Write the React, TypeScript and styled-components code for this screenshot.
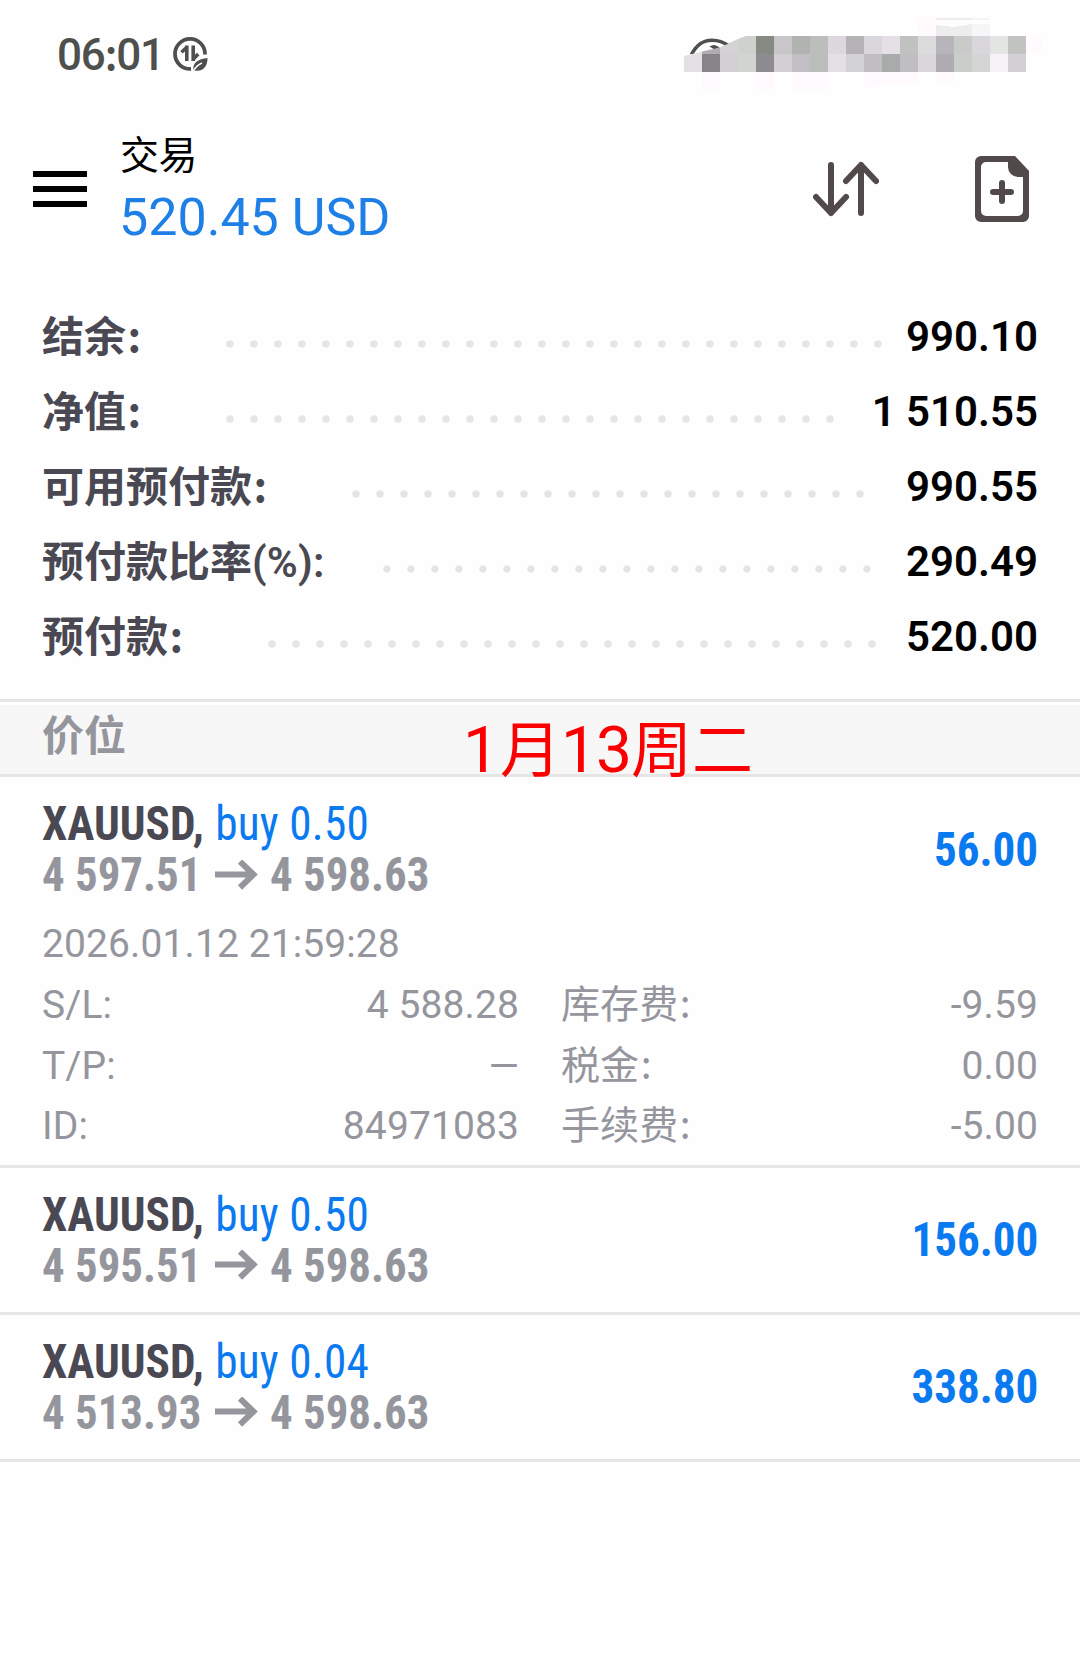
import React from "react";
import styled, { createGlobalStyle } from "styled-components";

const latin = `Roboto, "Noto Sans CJK SC", sans-serif`;
const condensed = `"Roboto Condensed", Roboto, "Noto Sans CJK SC", sans-serif`;

const GlobalStyle = createGlobalStyle`
  * { box-sizing: border-box; }
  body { margin: 0; background: #fefefe; font-family: ${latin}; }
`;

const Screen = styled.main`
  width: 1080px;
  height: 1658px;
  background: #fefefe;
  display: flex;
  flex-direction: column;
  overflow: hidden;
`;

const StatusBar = styled.header`
  height: 108px;
  display: flex;
  align-items: center;
  justify-content: space-between;
  padding: 0 36px 0 57px;
`;

const Clock = styled.div`
  display: flex;
  align-items: center;
  gap: 8px;
  padding-top: 2px;
  font-size: 44px;
  line-height: 52px;
  font-weight: 500;
  letter-spacing: -1.3px;
  color: #4e504e;
  svg { margin-top: -3px; }
`;

const Colon = styled.span<{ $gap?: number }>`
  font-family: "Noto Sans CJK SC", sans-serif;
  line-height: 0;
  padding-left: ${(p) => p.$gap ?? 0}px;
`;

const AppBar = styled.nav`
  height: 162px;
  display: flex;
  align-items: center;
  padding: 0 51px 0 33px;
`;

const MenuButton = styled.div`
  width: 54px;
  display: flex;
  flex-direction: column;
  gap: 9px;
  span { height: 6px; background: #000; }
`;

const TitleBlock = styled.div`
  flex: 1;
  padding-left: 33px;
`;

const Title = styled.div`
  font-size: 39px;
  line-height: 54px;
  letter-spacing: -0.5px;
  color: #000;
`;

const Total = styled.div`
  margin: 0 0 -2px -1px;
  padding-top: 2px;
  font-size: 52px;
  line-height: 66px;
  color: #1e80e6;
`;

const Actions = styled.div`
  display: flex;
  align-items: center;
  gap: 96px;
  svg { display: block; }
`;

const Summary = styled.section`
  padding: 29px 42px 25px;
`;

const SummaryRow = styled.div<{ $label: number; $dots: number }>`
  height: 75px;
  display: grid;
  grid-template-columns: ${(p) => p.$label}px ${(p) => p.$dots * 24}px 1fr;
  font-size: 42px;
  line-height: 75px;
  white-space: nowrap;
`;

const SummaryLabel = styled.span`
  padding-top: 1px;
  font-weight: 700;
  color: #4a4953;
`;

const Ratio = styled.span`
  font-weight: 600;
  letter-spacing: 0.2px;
`;

const Leader = styled.span`
  background: radial-gradient(circle at 12px 45px, #e5e5e5 3.3px, transparent 4.1px) 0 0 / 24px 75px repeat-x;
`;

const SummaryValue = styled.span`
  font-weight: 600;
  color: #000;
  text-align: right;
`;

const SectionHead = styled.div`
  position: relative;
  height: 78px;
  border-top: 3px solid #e5e5e5;
  border-bottom: 3px solid #e5e5e5;
  padding-top: 3px;
`;

const SectionTitle = styled.div`
  height: 69px;
  background: #f7f7f7;
  padding-left: 42px;
  font-size: 42px;
  line-height: 63px;
  font-weight: 700;
  color: #95969d;
`;

const DateNote = styled.div`
  position: absolute;
  left: 463px;
  top: 9px;
  font-size: 61px;
  line-height: 80px;
  color: #fb0000;
  white-space: nowrap;
`;

const Digits = styled.span<{ $spacing: number }>`
  font-size: 64px;
  letter-spacing: ${(p) => p.$spacing}px;
`;

const Position = styled.article`
  border-bottom: 3px solid #e5e5e5;
`;

const PositionHead = styled.div`
  height: 144px;
  padding: 0 42px;
  display: flex;
  align-items: center;
  justify-content: space-between;
  font-family: ${condensed};
  font-stretch: 75%;
  font-size: 48px;
  line-height: 51px;
  font-weight: 700;
`;

const Symbol = styled.div`
  color: #4a4953;
  transform: scaleX(0.942);
  transform-origin: left;
`;

const Side = styled.span`
  color: #0a7af0;
  font-weight: 400;
  letter-spacing: 0.2px;
  padding-left: 1px;
`;

const Prices = styled.div`
  display: flex;
  align-items: center;
  color: #95969d;
`;

const Price = styled.span<{ $width?: number }>`
  width: ${(p) => (p.$width ? `${p.$width}px` : "auto")};
  transform: scaleX(0.934);
  transform-origin: left;
`;

const Arrow = styled.svg`
  display: block;
  margin-right: 12px;
`;

const Profit = styled.div`
  color: #0a7af0;
  transform: scaleX(0.938);
  transform-origin: right;
`;

const Details = styled.div`
  padding: 0 42px 8px;
  font-size: 39px;
  letter-spacing: 0.1px;
  color: #95969d;
`;

const OpenTime = styled.div`
  line-height: 46px;
  padding-bottom: 8px;
`;

const DetailGrid = styled.div`
  display: grid;
  grid-template-columns: 477px 477px;
  column-gap: 42px;
  grid-auto-rows: 60.67px;
  line-height: 60.67px;
`;

const Detail = styled.div`
  display: flex;
  justify-content: space-between;
`;

const DataSaverIcon = () => (
  <svg width="36" height="36" viewBox="0 0 36 36" fill="none" stroke="#4e504e">
    <path d="M33 18.500A15 15 0 1 0 19 32.900" strokeWidth="3.800" />
    <path d="M14.800 9.500v15.500M9.500 16.200L14.800 11.200M21.200 9.500v15.500M21.200 23.200l5-5.200" strokeWidth="3.600" />
    <path d="M21.500 34.500C20 27 26 23 35.500 22C35.500 31 31 36 21.500 34.500Z" fill="#4e504e" stroke="none" />
    <path d="M21.500 34.800Q24.500 29.500 30 27" stroke="#fefefe" strokeWidth="1.400" />
  </svg>
);

const rowTop = ["", "", "#d5d2d5", "#cfd1cf", "#858a83", "#c9c6ca", "#b1b3b1", "#bcbebc", "#dcd8dd", "#b5b3b6", "#dad7dc", "#e5e0e5", "#c0c2c0", "#dcdcdc", "#b7b5b9", "#c9cbc9", "#dad7dc", "#e3e5e3", "#c1c3c1"];
const rowBottom = ["#e5e0e5", "#878387", "#d3d0d4", "#d2d4d2", "#8f8c91", "#d3d0d4", "#c1bfc3", "#bbbdbb", "#e5e0e5", "#d2d1d4", "#c0bec3", "#a8aba9", "#c0bec3", "#dad7dc", "#afadb1", "#cbcdcb", "#d5d5d5", "#f7f2f7", "#d2d0d4"];

const StatusMosaic = () => (
  <svg width="360" height="108" viewBox="684 0 360 108" shapeRendering="crispEdges">
    <g fill="#fefafe">
      <rect x="918" y="17" width="18" height="19" />
      <rect x="1026" y="36" width="16" height="18" />
      <rect x="702" y="72" width="18" height="18" />
      <rect x="756" y="72" width="18" height="18" />
      <rect x="792" y="72" width="36" height="18" />
      <path d="M864 72h54v10l-54 5z" />
      <rect x="936" y="72" width="18" height="11" />
    </g>
    <rect x="936" y="18" width="36" height="2" fill="#ededed" />
    <rect x="972" y="18" width="18" height="2" fill="#f5f5f5" />
    <path d="M936 25l18 2l18-3v12h-36z" fill="#ededed" />
    <rect x="972" y="24" width="18" height="12" fill="#f6f6f6" />
    {rowTop.map((c, i) => (i > 3 ? <rect key={i} x={684 + i * 18} y="36" width="18" height="18" fill={c} /> : null))}
    {rowBottom.map((c, i) => (i > 0 ? <rect key={i} x={684 + i * 18} y="54" width="18" height="18" fill={c} /> : null))}
    <g shapeRendering="auto">
      <path d="M691.500 54.500C696 45.500 703.500 40.200 712 40.200C718 40.200 723.500 42 729 46" fill="none" stroke="#4e504e" strokeWidth="3.600" />
      <path d="M709.500 46.500q5-3.500 10 1l-5 2z" fill="#4e504e" />
      <path d="M684 56l18-4.500v20.500h-18z" fill="#e5e0e5" />
      <path d="M702 51.500l18-4v6.500h-18z" fill="#b0adb1" />
      <path d="M720 47.500l18-8.500v15h-18z" fill="#d5d2d5" />
      <path d="M738 39l8-3h10v18h-18z" fill="#cfd1cf" />
    </g>
  </svg>
);

const SortIcon = () => (
  <svg width="66" height="60" viewBox="813 159 66 60" fill="none" stroke="#524a4a" strokeWidth="6" strokeLinecap="round" strokeLinejoin="round">
    <path d="M831 165v48M816 197l15 16l15-16M861 213v-48M846 181l15-16l15 16" />
  </svg>
);

const NewOrderIcon = () => (
  <svg width="54" height="66" viewBox="0 0 54 66" fill="#524a4a">
    <path fillRule="evenodd" d="M6 0H40L54 15V60a6 6 0 0 1-6 6H6a6 6 0 0 1-6-6V6a6 6 0 0 1 6-6zM11 6a5 5 0 0 0-5 5V55a5 5 0 0 0 5 5H43a5 5 0 0 0 5-5V21H43a10 10 0 0 1-10-10V6z" />
    <path d="M27 27v18M18 36h18" stroke="#524a4a" strokeWidth="6" strokeLinecap="round" />
  </svg>
);

const summary = [
  { label: "结余", value: "990.10", start: 176, dots: 28 },
  { label: "净值", value: "1 510.55", start: 176, dots: 26 },
  { label: "可用预付款", value: "990.55", start: 302, dots: 22 },
  { label: "预付款比率", suffix: "(%):", value: "290.49", start: 333, dots: 21 },
  { label: "预付款", value: "520.00", start: 218, dots: 26 },
];

const positions = [
  { volume: "0.50", from: "4 597.51", to: "4 598.63", profit: "56.00", open: true },
  { volume: "0.50", from: "4 595.51", to: "4 598.63", profit: "156.00", open: false },
  { volume: "0.04", from: "4 513.93", to: "4 598.63", profit: "338.80", open: false },
];

const details = [
  { label: "S/L:", value: "4 588.28" },
  { label: "库存费", cjk: true, value: "-9.59" },
  { label: "T/P:", value: "—" },
  { label: "税金", cjk: true, value: "0.00" },
  { label: "ID:", value: "84971083" },
  { label: "手续费", cjk: true, value: "-5.00" },
];

export default function App() {
  return (
    <Screen>
      <GlobalStyle />
      <StatusBar>
        <Clock>
          <span>06<Colon>:</Colon>01</span>
          <DataSaverIcon />
        </Clock>
        <StatusMosaic />
      </StatusBar>
      <AppBar>
        <MenuButton><span /><span /><span /></MenuButton>
        <TitleBlock>
          <Title>交易</Title>
          <Total>520.45 USD</Total>
        </TitleBlock>
        <Actions>
          <SortIcon />
          <NewOrderIcon />
        </Actions>
      </AppBar>
      <Summary>
        {summary.map((r) => (
          <SummaryRow key={r.label} $label={r.start} $dots={r.dots}>
            <SummaryLabel>
              {r.label}
              {r.suffix ? <Ratio>{r.suffix}</Ratio> : <Colon $gap={1.5}>:</Colon>}
            </SummaryLabel>
            <Leader />
            <SummaryValue>{r.value}</SummaryValue>
          </SummaryRow>
        ))}
      </Summary>
      <SectionHead>
        <SectionTitle>价位</SectionTitle>
        <DateNote>
          <Digits $spacing={1}>1</Digits>月<Digits $spacing={-1}>13</Digits>周二
        </DateNote>
      </SectionHead>
      {positions.map((p) => (
        <Position key={p.profit}>
          <PositionHead>
            <div>
              <Symbol>XAUUSD, <Side>buy {p.volume}</Side></Symbol>
              <Prices>
                <Price $width={172}>{p.from}</Price>
                <Arrow width="44" height="30" viewBox="0 0 44 30" fill="none" stroke="#95969d" strokeWidth="6">
                  <path d="M1 14.500H40M26 1.500L39.500 14.500L26 27.500" />
                </Arrow>
                <Price>{p.to}</Price>
              </Prices>
            </div>
            <Profit>{p.profit}</Profit>
          </PositionHead>
          {p.open && (
            <Details>
              <OpenTime>2026.01.12 21:59:28</OpenTime>
              <DetailGrid>
                {details.map((d) => (
                  <Detail key={d.label}>
                    <span>{d.label}{d.cjk && <Colon $gap={1.5}>:</Colon>}</span>
                    <span>{d.value}</span>
                  </Detail>
                ))}
              </DetailGrid>
            </Details>
          )}
        </Position>
      ))}
    </Screen>
  );
}
